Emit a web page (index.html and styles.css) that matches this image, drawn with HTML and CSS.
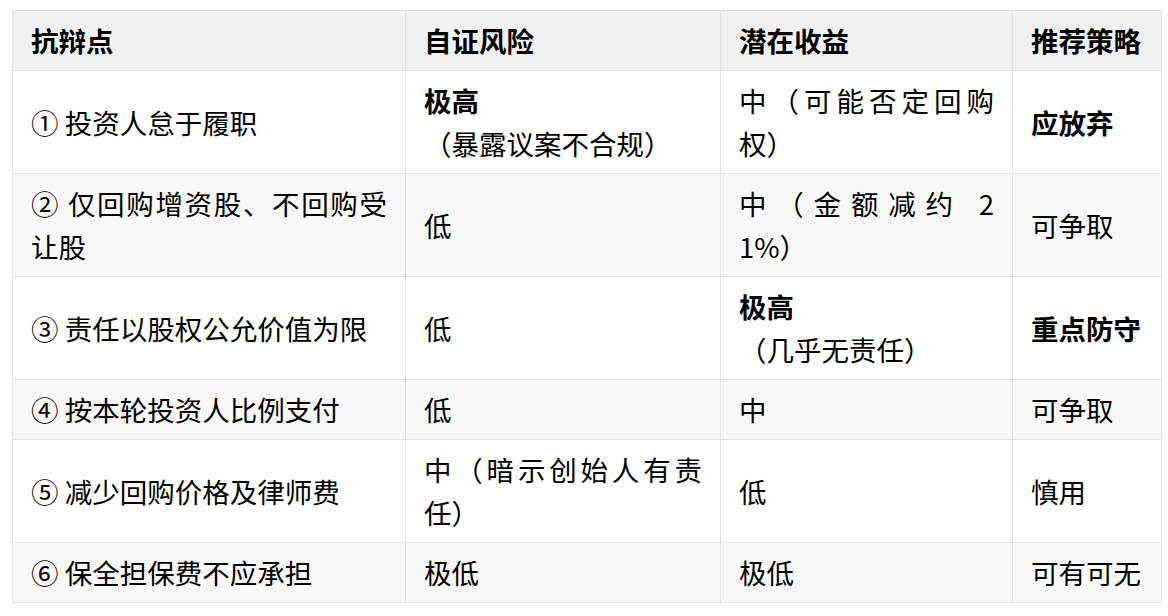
FILE: index.html
```html
<!DOCTYPE html>
<html lang="zh-CN">
<head>
<meta charset="utf-8">
<link rel="stylesheet" href="styles.css">
</head>
<body>
<div class="wrap">
<table class="grid">
  <colgroup>
    <col class="c1"><col class="c2"><col class="c3"><col class="c4">
  </colgroup>
  <thead>
    <tr><th>抗辩点</th><th>自证风险</th><th>潜在收益</th><th>推荐策略</th></tr>
  </thead>
  <tbody>
    <tr>
      <td>① 投资人怠于履职</td>
      <td><b>极高</b><br>（暴露议案不合规）</td>
      <td>中（可能否定回购权）</td>
      <td><b>应放弃</b></td>
    </tr>
    <tr>
      <td>② 仅回购增资股、不回购受让股</td>
      <td>低</td>
      <td><span class="jline">中（金额减约 2</span>1%）</td>
      <td>可争取</td>
    </tr>
    <tr>
      <td>③ 责任以股权公允价值为限</td>
      <td>低</td>
      <td><b>极高</b><br>（几乎无责任）</td>
      <td><b>重点防守</b></td>
    </tr>
    <tr>
      <td>④ 按本轮投资人比例支付</td>
      <td>低</td>
      <td>中</td>
      <td>可争取</td>
    </tr>
    <tr>
      <td>⑤ 减少回购价格及律师费</td>
      <td>中（暗示创始人有责任）</td>
      <td>低</td>
      <td>慎用</td>
    </tr>
    <tr>
      <td>⑥ 保全担保费不应承担</td>
      <td>极低</td>
      <td>极低</td>
      <td>可有可无</td>
    </tr>
  </tbody>
</table>
</div>
</body>
</html>
```
FILE: styles.css
```css
html, body {
  margin: 0;
  padding: 0;
  background: #ffffff;
}
.wrap {
  padding: 10px 12px;
}
.grid {
  border-collapse: collapse;
  table-layout: fixed;
  width: 1149px;
  font-family: "Noto Sans CJK SC", "Microsoft YaHei", sans-serif;
  font-size: 27.5px;
  line-height: 43px;
  color: #000;
  text-spacing-trim: space-all;
}
.c1 { width: 393px; }
.c2 { width: 315px; }
.c3 { width: 292px; }
.c4 { width: 149px; }
.grid th,
.grid td {
  border: 1px solid #e2e2e2;
  padding: 8px 18px;
  text-align: justify;
  word-break: break-all;
  vertical-align: middle;
}
.grid th {
  background: #f0f0f0;
  font-weight: 700;
  text-align: left;
}
.grid tbody tr:nth-child(even) td {
  background: #f8f8f8;
}
.grid b {
  font-weight: 700;
}
.jline {
  display: block;
  text-align: justify;
  text-align-last: justify;
}
```
